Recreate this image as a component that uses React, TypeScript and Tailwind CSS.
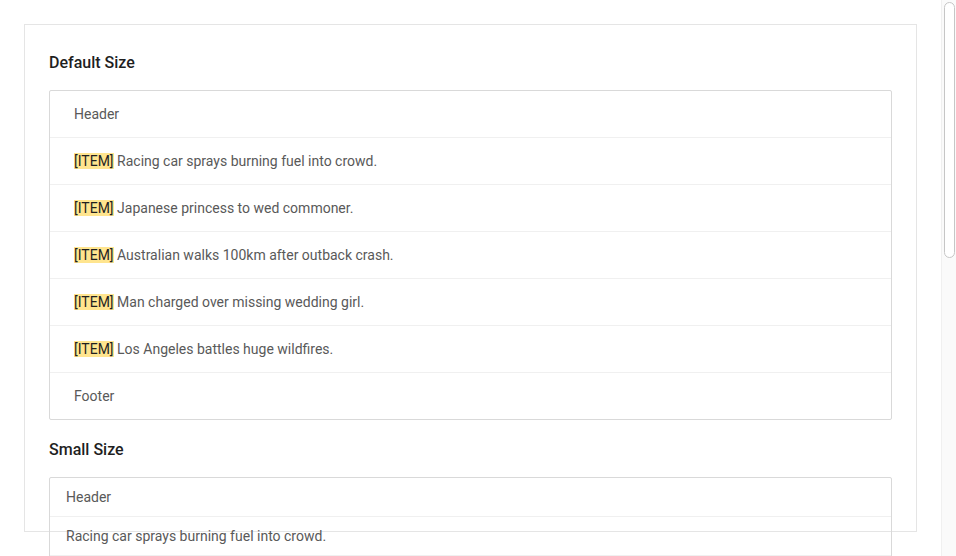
import React from 'react';

const items = [
  'Racing car sprays burning fuel into crowd.',
  'Japanese princess to wed commoner.',
  'Australian walks 100km after outback crash.',
  'Man charged over missing wedding girl.',
  'Los Angeles battles huge wildfires.',
];

interface ListProps {
  size: 'default' | 'small' | 'large';
  mark?: boolean;
}

const rowPad = {
  default: 'px-6 py-3',
  small: 'px-4 py-2',
  large: 'px-6 py-4',
};

const SizedList: React.FC<ListProps> = ({ size, mark }) => {
  const pad = rowPad[size];
  return (
    <div className="rounded-[2px] border border-[#d9d9d9]">
      <div className={`${pad} border-b border-[#f0f0f0] leading-[22px]`}>Header</div>
      {items.map((item) => (
        <div key={item} className={`${pad} border-b border-[#f0f0f0] leading-[22px]`}>
          {mark && <mark className="bg-[#ffe58f] text-[#1f1f1f]">[ITEM]</mark>}
          {mark && ' '}
          {item}
        </div>
      ))}
      <div className={`${pad} leading-[22px]`}>Footer</div>
    </div>
  );
};

const App: React.FC = () => {
  return (
    <div className="flex bg-white text-sm text-[#595959]" style={{ fontFamily: 'Roboto, "Liberation Sans", sans-serif' }}>
      <main className="flex-1 p-6">
        <div className="h-[508px] border border-[#e5e5e5] p-6">
          <h4 className="text-base font-medium leading-6 pt-[2px] text-[#1f1f1f] mb-[15px]">Default Size</h4>
          <SizedList size="default" mark />
          <h4 className="text-base font-medium leading-6 pt-[2px] text-[#1f1f1f] mt-4 mb-[15px]">Small Size</h4>
          <SizedList size="small" />
          <h4 className="text-base font-medium leading-6 pt-[2px] text-[#1f1f1f] mt-4 mb-[15px]">Large Size</h4>
          <SizedList size="large" />
        </div>
      </main>
      <div className="w-[15px] h-[556px] shrink-0 bg-[#fafafa] border-l border-[#f0f0f0] pl-[2px] pr-[1px] pt-[2px]">
        <div className="h-[256px] w-[11px] rounded-full border border-[#c6c6c6] bg-white" />
      </div>
    </div>
  );
};

export default App;
